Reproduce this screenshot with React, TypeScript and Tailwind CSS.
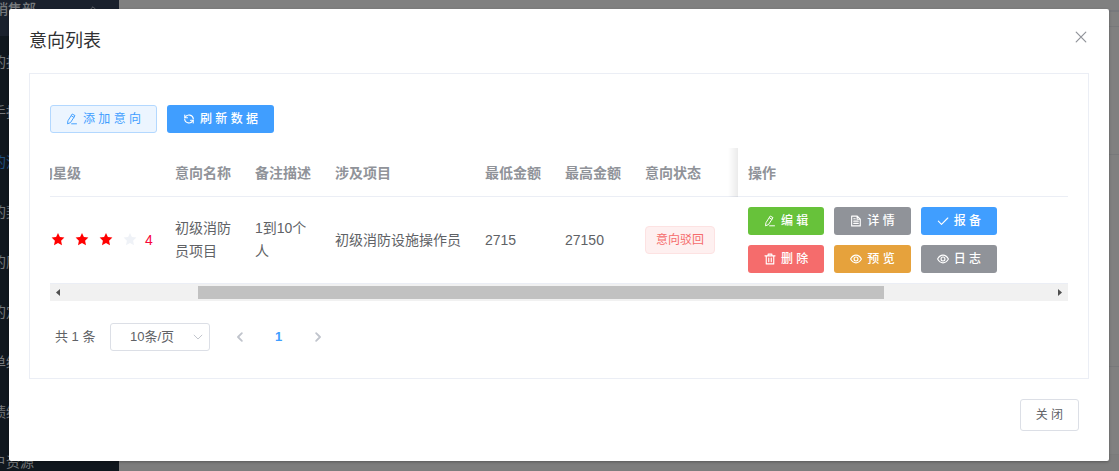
import React, { useLayoutEffect, useRef, useState } from 'react';

type IconProps = { className?: string };

const Svg = ({ className = 'h-3 w-3', children }: IconProps & { children: React.ReactNode }) => (
  <svg className={className} viewBox="0 0 16 16" fill="none" stroke="currentColor" strokeLinecap="round" strokeLinejoin="round" aria-hidden="true">
    {children}
  </svg>
);

const EditIcon = () => (
  <Svg>
    <path strokeWidth="1.3" d="M8.8 1.6 12 3.5 6 12.8 2 14.4 2.5 10.9z" />
    <path strokeWidth="1.3" d="M7.4 3.9 10.5 5.8M7.5 14.4H14" />
  </Svg>
);

const RefreshIcon = () => (
  <Svg>
    <path strokeWidth="1.5" d="M2.4 2.8v3.6H6M13.6 13.2V9.6H10" />
    <path strokeWidth="1.5" d="M2.8 6A5.8 5.8 0 0 1 13.8 8M13.2 10A5.8 5.8 0 0 1 2.2 8" />
  </Svg>
);

const DocumentIcon = () => (
  <Svg>
    <path strokeWidth="1.5" d="M2.2 1.5h7.5l4 4v9H2.2zM9.5 1.7v4h4M5 5h2M5 8.2h6M5 11.2h6" />
  </Svg>
);

const CheckIcon = () => (
  <Svg>
    <path strokeWidth="1.5" d="M1.8 8.2 6 12.4 14.4 4" />
  </Svg>
);

const DeleteIcon = () => (
  <Svg>
    <path strokeWidth="1.5" d="M1.3 3.8h13.4M5.5 3.5v-2h5v2M3 4v10.5h10V4M6.3 6.8v4.8M9.7 6.8v4.8" />
  </Svg>
);

const ViewIcon = () => (
  <Svg>
    <path strokeWidth="1.5" d="M.8 8C2.6 4.7 5 2.9 8 2.9s5.4 1.8 7.2 5.1c-1.8 3.3-4.2 5.1-7.2 5.1S2.6 11.3.8 8z" />
    <circle strokeWidth="1.5" cx="8" cy="8" r="2.6" />
  </Svg>
);

const CloseIcon = () => (
  <Svg className="h-4 w-4">
    <path strokeWidth="1.2" d="M3.2 3.2 12.8 12.8M12.8 3.2 3.2 12.8" />
  </Svg>
);

const Star = ({ on }: { on: boolean }) => (
  <svg className={on ? 'mr-1.5 h-[18px] w-[18px] shrink-0 text-[#ff0000]' : 'mr-1.5 h-[18px] w-[18px] shrink-0 text-[#eff2f7]'} viewBox="0 0 18 18" fill="currentColor" aria-hidden="true">
    <path d="M9 2 10.9 6.1 15.4 6.6 12.1 9.7 13 14.2 9 12 5 14.2 5.9 9.7 2.6 6.6 7.1 6.1z" />
  </svg>
);

const menu = ['我的报备', '新手指南', '我的消息', '我的契约', '我的历史', '我的定金', '订单统计', '业绩统计', '客户资源'];

const actions = [
  { label: '编 辑', icon: <EditIcon />, color: 'bg-[#67c23a]' },
  { label: '详 情', icon: <DocumentIcon />, color: 'bg-[#909399]' },
  { label: '报 备', icon: <CheckIcon />, color: 'bg-[#409eff]' },
  { label: '删 除', icon: <DeleteIcon />, color: 'bg-[#f56c6c]' },
  { label: '预 览', icon: <ViewIcon />, color: 'bg-[#e6a23c]' },
  { label: '日 志', icon: <ViewIcon />, color: 'bg-[#909399]' },
];

const columns = ['意向星级', '意向名称', '备注描述', '涉及项目', '最低金额', '最高金额', '意向状态'];

const smallButton = 'flex h-7 items-center gap-[5px] rounded-[3px] text-xs whitespace-nowrap';

// Dimmed page under the dialog
const Backdrop = () => (
  <div className="absolute inset-0 flex overflow-hidden bg-[#808080]" aria-hidden="true">
    <aside className="w-[119px] shrink-0 overflow-hidden bg-[#10171e] text-sm text-[#76797c]">
      <div className="-mt-5 flex h-14 items-center justify-between bg-[#1a212d] pt-0.5 pr-5">
        <span className="-ml-1.5 font-medium">销售部</span>
        <Svg>
          <path d="M2 11 8 5l6 6" />
        </Svg>
      </div>
      <ul className="-ml-[22px] pt-px">
        {menu.map((item) => (
          <li key={item} className={item === '我的消息' ? 'flex h-[50px] items-center text-[#204f80]' : 'flex h-[50px] items-center'}>
            {item}
          </li>
        ))}
      </ul>
    </aside>
    <div className="flex grow flex-col">
      <div className="h-3 border-b-2 border-[#77787c]" />
      <div className="h-[15px] border-b border-[#77787a]" />
      <div className="h-32 border-b border-[#77787a]" />
      <div className="h-[212px] border-b border-[#77787a]" />
      <div className="h-[88px] border-b border-[#7b7b7b]" />
      <div className="grow bg-[#7d7d7d]" />
    </div>
  </div>
);

const IntentTable = () => {
  const scroller = useRef<HTMLDivElement>(null);

  useLayoutEffect(() => {
    if (scroller.current) scroller.current.scrollLeft = 35;
  }, []);

  return (
    <div className="mt-[15px]">
      <div ref={scroller} className="overflow-x-auto [scrollbar-width:none]">
        <table className="w-full min-w-[1060px] table-fixed border-separate border-spacing-0 text-left text-sm leading-[23px] text-[#606266]">
          <colgroup>
            <col className="w-[150px]" />
            <col className="w-20" />
            <col className="w-20" />
            <col className="w-[150px]" />
            <col className="w-20" />
            <col className="w-20" />
            <col />
            <col className="w-[330px]" />
          </colgroup>
          <thead>
            <tr className="h-[49px] text-[#909399]">
              {columns.map((name) => (
                <th key={name} className="border-b border-[#ebeef5] px-2.5 pt-0.5 font-bold whitespace-nowrap">{name}</th>
              ))}
              <th className="sticky right-0 border-b border-[#ebeef5] bg-white px-2.5 pt-0.5 font-bold">
                <span className="absolute top-0 right-full -bottom-px w-2.5 bg-linear-to-r from-transparent to-black/8" />
                操作
              </th>
            </tr>
          </thead>
          <tbody>
            <tr>
              <td className="border-b border-[#ebeef5] px-2.5">
                <div className="flex items-center">
                  {[1, 2, 3, 4, 5].map((n) => <Star key={n} on={n <= 4} />)}
                  <span className="text-[#f7063c]">4</span>
                </div>
              </td>
              <td className="border-b border-[#ebeef5] px-2.5">初级消防员项目</td>
              <td className="border-b border-[#ebeef5] px-2.5">1到10个人</td>
              <td className="border-b border-[#ebeef5] px-2.5">初级消防设施操作员</td>
              <td className="border-b border-[#ebeef5] px-2.5">2715</td>
              <td className="border-b border-[#ebeef5] px-2.5">27150</td>
              <td className="border-b border-[#ebeef5] px-2.5">
                <span className="flex h-7 w-fit items-center rounded border border-[#fde2e2] bg-[#fef0f0] px-2.5 text-xs whitespace-nowrap text-[#f56c6c]">意向驳回</span>
              </td>
              <td className="sticky right-0 border-b border-[#ebeef5] bg-white p-2.5">
                <div className="flex flex-wrap gap-2.5">
                  {actions.map((action) => (
                    <button key={action.label} className={`${smallButton} px-4 font-medium text-white ${action.color}`}>
                      {action.icon}
                      {action.label}
                    </button>
                  ))}
                </div>
              </td>
            </tr>
          </tbody>
        </table>
      </div>
      {/* Scrollbar */}
      <div className="flex h-[17px] items-center bg-[#f1f1f1] text-[#505050]">
        <svg className="h-[17px] w-[17px] shrink-0" viewBox="0 0 17 17" fill="currentColor" aria-hidden="true"><path d="M10 5v7L6 8.5z" /></svg>
        <div className="grow">
          <div className="ml-[13.3%] h-[13px] w-[69.7%] bg-[#c1c1c1]" />
        </div>
        <svg className="h-[17px] w-[17px] shrink-0" viewBox="0 0 17 17" fill="currentColor" aria-hidden="true"><path d="M7 5v7l4-3.5z" /></svg>
      </div>
    </div>
  );
};

const Pagination = () => {
  const [size, setSize] = useState('10');

  return (
    <div className="mt-[22px] flex h-7 items-center pl-[5px] text-[13px] text-[#606266]">
      <span className="w-[55px]">共 1 条</span>
      <div className="relative">
        <select
          aria-label="每页条数"
          value={size}
          onChange={(e) => setSize(e.target.value)}
          className="h-7 w-[100px] appearance-none rounded-[3px] border border-[#dcdfe6] bg-white pr-6 pl-2 text-center"
        >
          <option value="10">10条/页</option>
          <option value="20">20条/页</option>
        </select>
        <span className="pointer-events-none absolute inset-y-0 right-1.5 flex items-center text-[#c0c4cc]">
          <Svg>
            <path strokeWidth="1.3" d="M2.8 5.5 8 10.7l5.2-5.2" />
          </Svg>
        </span>
      </div>
      <div className="ml-2.5 flex items-center">
        <button aria-label="上一页" className="flex w-[39px] justify-center text-[#c0c4cc]">
          <Svg>
            <path strokeWidth="2.4" d="M10.5 2.8 5.3 8l5.2 5.2" />
          </Svg>
        </button>
        <button className="w-[39px] text-center font-bold text-[#409eff]">1</button>
        <button aria-label="下一页" className="flex w-[39px] justify-center text-[#c0c4cc]">
          <Svg>
            <path strokeWidth="2.4" d="M5.5 2.8 10.7 8l-5.2 5.2" />
          </Svg>
        </button>
      </div>
    </div>
  );
};

const App = () => (
  <div className="relative min-h-screen px-[9px] pt-[9px] pr-2.5 pb-2.5 font-['Liberation_Sans','Noto_Sans_CJK_SC',sans-serif]">
    <Backdrop />
    <div role="dialog" aria-labelledby="dialog-title" className="relative rounded-xs bg-white shadow-[0_1px_3px_rgba(0,0,0,0.3)]">
      <header className="flex items-start justify-between px-5 pt-5">
        <h2 id="dialog-title" className="text-lg leading-6 text-[#303133]">意向列表</h2>
        <button aria-label="关闭" className="text-[#909399]">
          <CloseIcon />
        </button>
      </header>
      <div className="p-5">
        <section className="border border-[#ebeef5] px-5 pt-[31px] pb-[27px]">
          <div className="flex gap-2.5">
            <button className={`${smallButton} border border-[#b3d8ff] bg-[#ecf5ff] px-[15px] text-[#409eff]`}>
              <EditIcon />
              添 加 意 向
            </button>
            <button className={`${smallButton} bg-[#409eff] px-4 font-medium text-white`}>
              <RefreshIcon />
              刷 新 数 据
            </button>
          </div>
          <IntentTable />
          <Pagination />
        </section>
      </div>
      <footer className="flex justify-end px-[30px] pb-[30px]">
        <button className="h-8 rounded-[3px] border border-[#dcdfe6] bg-white px-[15px] text-xs text-[#606266]">关 闭</button>
      </footer>
    </div>
  </div>
);

export default App;
